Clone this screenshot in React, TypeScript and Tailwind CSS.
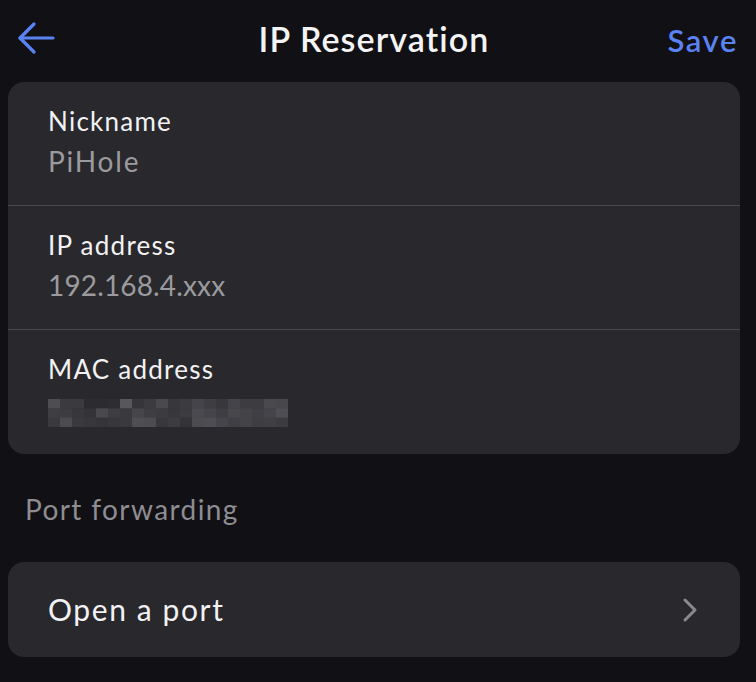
import React from "react";

const macCells: string[][] = [
  ["#4e4d51","#3b3a3e","#3b3a3e","#2c2b2f","#2c2b2f","#2e2d31","#58575b","#363539","#3c3b3f","#4a494d","#38373b","#3c3b3f","#45444a","#3e3d41","#38373b","#45444a","#3d3c40","#3d3c40","#4a494d","#48474b"],
  ["#3f3e42","#3d3c40","#38373b","#343337","#4a494d","#3e3d41","#3a393d","#46454a","#3f3e42","#3c3b3f","#38373b","#3c3b3f","#4a494d","#45444a","#3f3e42","#48474b","#444347","#403f43","#45444a","#4f4e52"],
  ["#3a393d","#4c4b4f","#3a393d","#38373b","#353438","#38373b","#3a393d","#4f4e52","#4d4c50","#38373b","#3d3c40","#343337","#4c4b4f","#4e4d51","#45444a","#403f43","#444347","#3e3d41","#404044","#3c3b3f"],
];

function MacBlur() {
  const w = 12;
  const h = 9.3;
  return (
    <svg width="240" height="28" viewBox="0 0 240 28" className="block">
      {macCells.map((row, r) =>
        row.map((c, i) => (
          <rect key={`${r}-${i}`} x={i * w} y={r * h} width={w + 0.5} height={h + 0.5} fill={c} />
        ))
      )}
    </svg>
  );
}

function Field({ label, value, last }: { label: string; value?: string; last?: boolean }) {
  return (
    <div className={`h-[124px] pl-10 pt-[22px] ${last ? "" : "border-b border-[#4a494d]"}`}>
      <div className="text-[26px] leading-[34px] tracking-[1.25px] text-[#f2f2f4]">{label}</div>
      {value ? (
        <div className="mt-[6px] text-[28px] leading-[34px] tracking-[0.15px] text-[#9b9a9f]">
          {value === "PiHole" ? <span className="tracking-[1.8px]">{value}</span> : value}
        </div>
      ) : (
        <div className="mt-[13px]">
          <MacBlur />
        </div>
      )}
    </div>
  );
}

export default function App() {
  return (
    <div
      className="w-[756px] h-[682px] overflow-hidden bg-[#111014] text-white"
      style={{ fontFamily: "Lato, 'Open Sans', sans-serif" }}
    >
      <div className="relative h-[82px] flex items-center justify-center">
        <button className="absolute left-[16px] top-[20px] w-[40px] h-[36px] flex items-center justify-center">
          <svg width="38" height="34" viewBox="0 0 38 34" fill="none" stroke="#5b82f2" strokeWidth="3.2" strokeLinecap="round" strokeLinejoin="round">
            <path d="M36 17H3" />
            <path d="M17 3L3 17L17 31" />
          </svg>
        </button>
        <div className="text-[34px] font-semibold tracking-[1.1px] text-[#f4f4f6] -mt-[6px] -ml-[8px]">IP Reservation</div>
        <div className="absolute right-[18px] top-[17px] text-[31px] font-semibold tracking-[1.6px] text-[#5b82f2]">Save</div>
      </div>

      <div className="ml-2 w-[732px] rounded-[16px] bg-[#29282c] overflow-hidden">
        <Field label="Nickname" value="PiHole" />
        <Field label="IP address" value="192.168.4.xxx" />
        <Field label="MAC address" last />
      </div>

      <div className="pl-[25px] pt-[38px] h-[108px] text-[28px] leading-[34px] tracking-[1.4px] text-[#8e8d92]">Port forwarding</div>

      <div className="ml-2 w-[732px] h-[95px] rounded-[16px] bg-[#29282c] flex items-center justify-between pl-10 pr-[42px]">
        <div className="text-[30px] tracking-[1.6px] text-[#f2f2f4]">Open a port</div>
        <svg width="16" height="26" viewBox="0 0 16 26" fill="none" stroke="#8a898e" strokeWidth="3" strokeLinecap="round" strokeLinejoin="round">
          <path d="M3 3L13 13L3 23" />
        </svg>
      </div>
    </div>
  );
}
